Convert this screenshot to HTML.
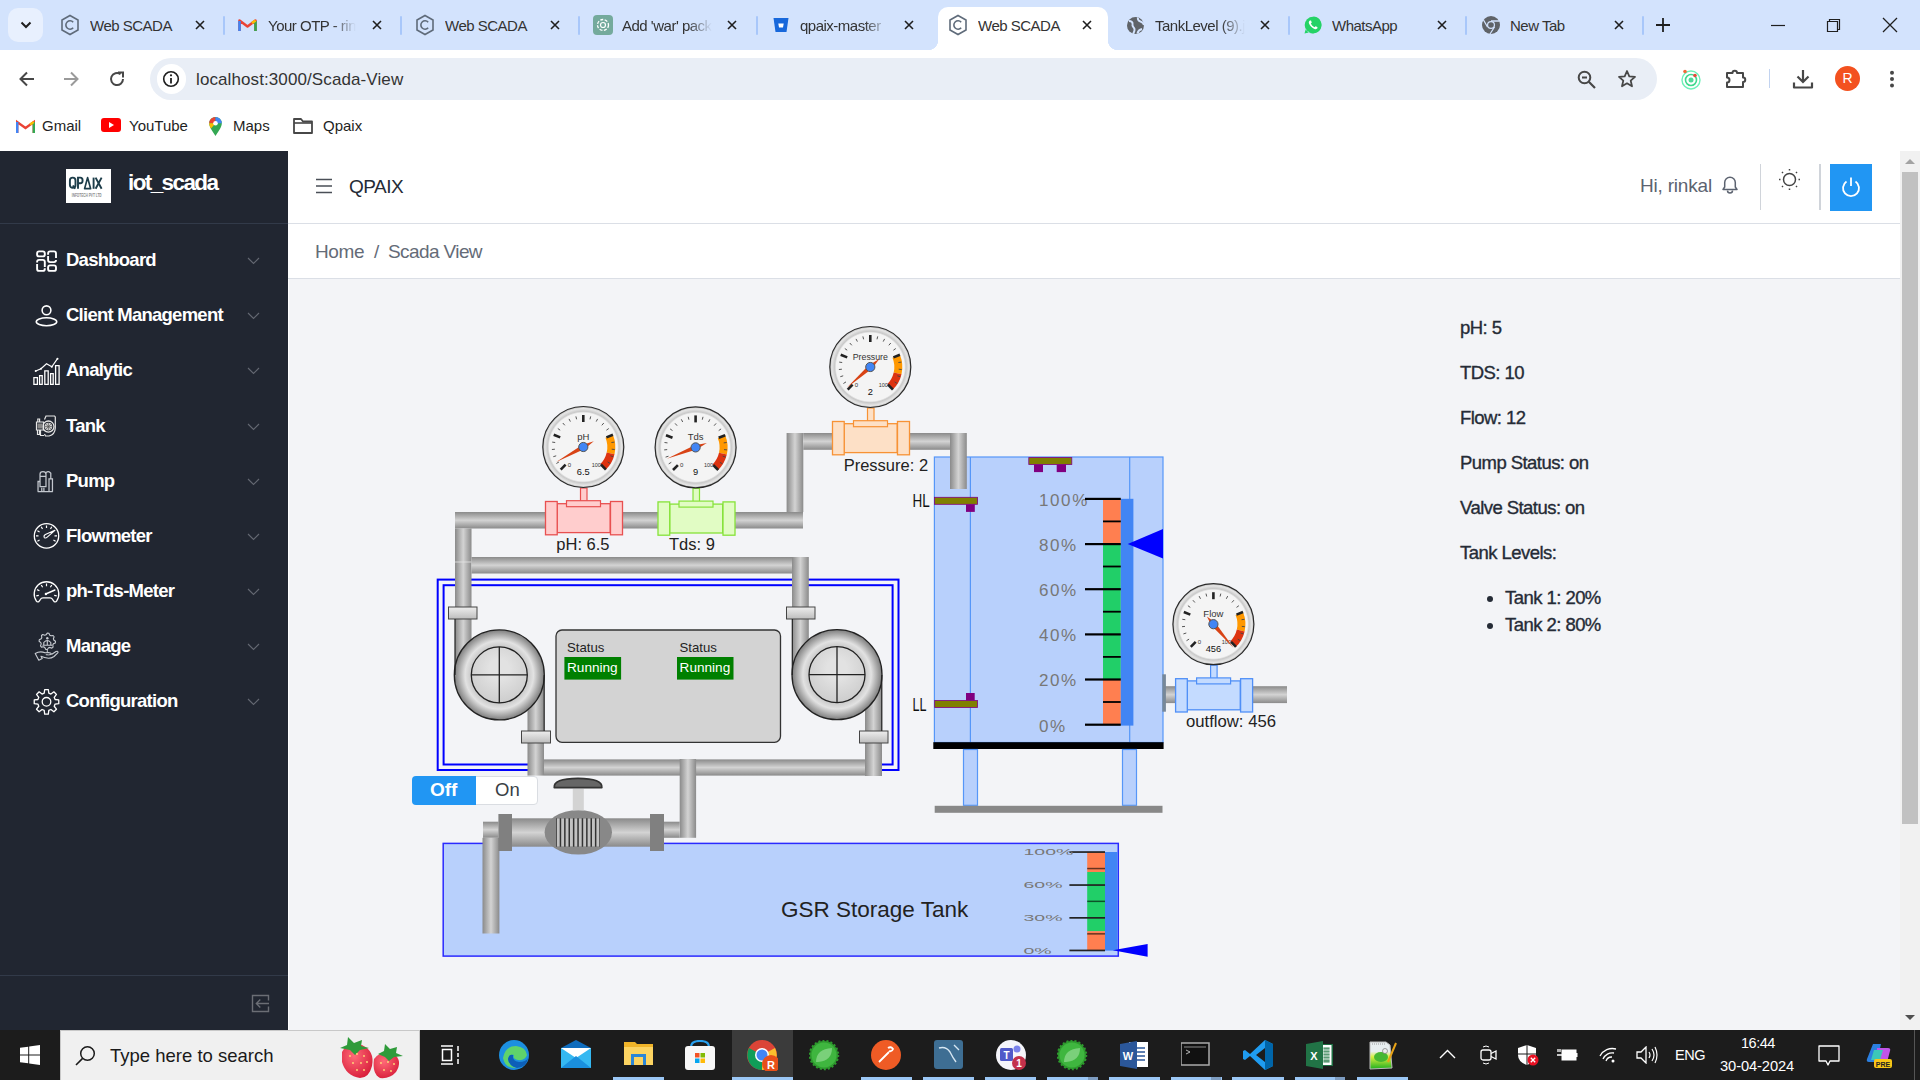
<!DOCTYPE html>
<html><head><meta charset="utf-8">
<style>
*{box-sizing:border-box;margin:0;padding:0}
html,body{width:1920px;height:1080px;overflow:hidden;font-family:"Liberation Sans",sans-serif;background:#fff}
.abs{position:absolute}
#tabs{position:absolute;left:0;top:0;width:1920px;height:50px;background:#d3e3fd}
#toolbar{position:absolute;left:0;top:50px;width:1920px;height:58px;background:#fff;border-radius:8px 8px 0 0}
#bm{position:absolute;left:0;top:108px;width:1920px;height:43px;background:#fff}
#page{position:absolute;left:0;top:151px;width:1920px;height:879px;background:#f3f4f7;overflow:hidden}
#side{position:absolute;left:0;top:0;width:288px;height:879px;background:#212631}
#hdr{position:absolute;left:288px;top:0;width:1612px;height:73px;background:#fff;border-bottom:1px solid #dbdfe6}
#bc{position:absolute;left:288px;top:73px;width:1612px;height:55px;background:#fff;border-bottom:1px solid #dbdfe6}
#scroll{position:absolute;left:1900px;top:0;width:20px;height:879px;background:#f1f1f1}
#taskbar{position:absolute;left:0;top:1030px;width:1920px;height:50px;background:#1c1c1c}
.t{position:absolute;white-space:nowrap}
</style></head><body>

<div id="tabs">
  <div class="abs" style="left:8px;top:8px;width:35px;height:34px;border-radius:10px;background:#e8f0fe"></div>
  <svg class="abs" style="left:19px;top:19px" width="14" height="12" viewBox="0 0 14 12"><path d="M2.5 3.5 L7 8 L11.5 3.5" fill="none" stroke="#1f1f1f" stroke-width="2"/></svg>
  <!-- active tab -->
  <div class="abs" style="left:938px;top:7px;width:170px;height:43px;background:#fff;border-radius:10px 10px 0 0"></div>
  <div class="abs" style="left:928px;top:40px;width:10px;height:10px;background:radial-gradient(circle at 0 0,#d3e3fd 10px,#fff 10.5px)"></div>
  <div class="abs" style="left:1108px;top:40px;width:10px;height:10px;background:radial-gradient(circle at 10px 0,#d3e3fd 10px,#fff 10.5px)"></div>
  <svg class="abs" style="left:60px;top:14px" width="20" height="22" viewBox="0 0 20 22"><path d="M10 1.5L18 6V16L10 20.5L2 16V6Z" fill="none" stroke="#5f6b7a" stroke-width="1.6"/><path d="M13.2 8.2A4.2 4.2 0 1 0 13.2 13.8" fill="none" stroke="#5f6b7a" stroke-width="1.6"/></svg>
  <div class="t" style="left:90px;top:17px;font-size:15px;letter-spacing:-0.5px;color:#333;width:100px;overflow:hidden">Web SCADA</div>
  <svg class="abs" style="left:195px;top:20px" width="10" height="10"><path d="M1 1L9 9M9 1L1 9" stroke="#1f1f1f" stroke-width="1.6"/></svg>
  <div class="abs" style="left:223px;top:16px;width:2px;height:19px;background:#a8c7fa;border-radius:1px"></div>
  <svg class="abs" style="left:238px;top:18px" width="19" height="14" viewBox="0 0 19 14"><path d="M1.5 13V2.5L9.5 8.5L17.5 2.5V13" fill="none" stroke="#ea4335" stroke-width="2.6" stroke-linejoin="round"/><path d="M1.5 3V13" stroke="#4285f4" stroke-width="2.6"/><path d="M17.5 3V13" stroke="#34a853" stroke-width="2.6"/><path d="M14 5L17.5 2.5" stroke="#fbbc04" stroke-width="2.6"/></svg>
  <div class="t" style="left:268px;top:17px;font-size:15px;letter-spacing:-0.5px;color:#333;width:88px;overflow:hidden;-webkit-mask-image:linear-gradient(to right,#000 64px,transparent 88px)">Your OTP - rinkal</div>
  <svg class="abs" style="left:372px;top:20px" width="10" height="10"><path d="M1 1L9 9M9 1L1 9" stroke="#1f1f1f" stroke-width="1.6"/></svg>
  <div class="abs" style="left:400px;top:16px;width:2px;height:19px;background:#a8c7fa;border-radius:1px"></div>
  <svg class="abs" style="left:415px;top:14px" width="20" height="22" viewBox="0 0 20 22"><path d="M10 1.5L18 6V16L10 20.5L2 16V6Z" fill="none" stroke="#5f6b7a" stroke-width="1.6"/><path d="M13.2 8.2A4.2 4.2 0 1 0 13.2 13.8" fill="none" stroke="#5f6b7a" stroke-width="1.6"/></svg>
  <div class="t" style="left:445px;top:17px;font-size:15px;letter-spacing:-0.5px;color:#333;width:100px;overflow:hidden">Web SCADA</div>
  <svg class="abs" style="left:550px;top:20px" width="10" height="10"><path d="M1 1L9 9M9 1L1 9" stroke="#1f1f1f" stroke-width="1.6"/></svg>
  <div class="abs" style="left:578px;top:16px;width:2px;height:19px;background:#a8c7fa;border-radius:1px"></div>
  <div class="abs" style="left:593px;top:15px;width:20px;height:20px;border-radius:4px;background:#74aa9c"></div><svg class="abs" style="left:593px;top:15px" width="20" height="20" viewBox="0 0 20 20"><circle cx="10" cy="10" r="5.5" fill="none" stroke="#fff" stroke-width="1.3" stroke-dasharray="3 1.5"/><circle cx="10" cy="10" r="2.5" fill="none" stroke="#fff" stroke-width="1.2"/></svg>
  <div class="t" style="left:622px;top:17px;font-size:15px;letter-spacing:-0.5px;color:#333;width:90px;overflow:hidden;-webkit-mask-image:linear-gradient(to right,#000 66px,transparent 90px)">Add 'war' package</div>
  <svg class="abs" style="left:727px;top:20px" width="10" height="10"><path d="M1 1L9 9M9 1L1 9" stroke="#1f1f1f" stroke-width="1.6"/></svg>
  <div class="abs" style="left:756px;top:16px;width:2px;height:19px;background:#a8c7fa;border-radius:1px"></div>
  <svg class="abs" style="left:772px;top:16px" width="18" height="18" viewBox="0 0 18 18"><path d="M1.5 2H16.5L14.5 16H3.5Z" fill="#1868db"/><path d="M6.3 7.5H11.7L11 11.5H7Z" fill="#fff"/></svg>
  <div class="t" style="left:800px;top:17px;font-size:15px;letter-spacing:-0.5px;color:#333;width:88px;overflow:hidden;-webkit-mask-image:linear-gradient(to right,#000 64px,transparent 88px)">qpaix-master</div>
  <svg class="abs" style="left:904px;top:20px" width="10" height="10"><path d="M1 1L9 9M9 1L1 9" stroke="#1f1f1f" stroke-width="1.6"/></svg>
  <svg class="abs" style="left:948px;top:14px" width="20" height="22" viewBox="0 0 20 22"><path d="M10 1.5L18 6V16L10 20.5L2 16V6Z" fill="none" stroke="#5f6b7a" stroke-width="1.6"/><path d="M13.2 8.2A4.2 4.2 0 1 0 13.2 13.8" fill="none" stroke="#5f6b7a" stroke-width="1.6"/></svg>
  <div class="t" style="left:978px;top:17px;font-size:15px;letter-spacing:-0.5px;color:#333;width:100px;overflow:hidden">Web SCADA</div>
  <svg class="abs" style="left:1082px;top:20px" width="10" height="10"><path d="M1 1L9 9M9 1L1 9" stroke="#1f1f1f" stroke-width="1.6"/></svg>
  <svg class="abs" style="left:1126px;top:16px" width="19" height="19" viewBox="0 0 19 19"><circle cx="9.5" cy="9.5" r="8.5" fill="#5f6368"/><path d="M3 5C5 5 7 6 6.5 8.5C6 10.5 8 11 8.5 13C9 15 7.5 17 7 18M12 1.5C11.5 3.5 12.5 5 14.5 5.5C16 6 17.5 7 18 9M11.5 17.5C12 15 13.5 13.5 16 13" fill="none" stroke="#d3e3fd" stroke-width="2"/></svg>
  <div class="t" style="left:1155px;top:17px;font-size:15px;letter-spacing:-0.5px;color:#333;width:90px;overflow:hidden;-webkit-mask-image:linear-gradient(to right,#000 66px,transparent 90px)">TankLevel (9).jsx</div>
  <svg class="abs" style="left:1260px;top:20px" width="10" height="10"><path d="M1 1L9 9M9 1L1 9" stroke="#1f1f1f" stroke-width="1.6"/></svg>
  <div class="abs" style="left:1288px;top:16px;width:2px;height:19px;background:#a8c7fa;border-radius:1px"></div>
  <svg class="abs" style="left:1303px;top:15px" width="20" height="20" viewBox="0 0 20 20"><path d="M10 1.5A8.5 8.5 0 1 1 2.7 14.3L1.5 18.5L5.8 17.4A8.5 8.5 0 0 0 10 1.5Z" fill="#25d366"/><circle cx="10" cy="10" r="8.3" fill="#25d366"/><path d="M7 5.5C6 6 5.5 7 6 8.5C7 11 9 13 11.5 14C13 14.5 14 14 14.5 13L14.3 12L12.5 11.2L11.5 12.2C10 11.5 8.5 10 7.8 8.5L8.8 7.5L8 5.6Z" fill="#fff"/></svg>
  <div class="t" style="left:1332px;top:17px;font-size:15px;letter-spacing:-0.5px;color:#333;width:100px;overflow:hidden">WhatsApp</div>
  <svg class="abs" style="left:1437px;top:20px" width="10" height="10"><path d="M1 1L9 9M9 1L1 9" stroke="#1f1f1f" stroke-width="1.6"/></svg>
  <div class="abs" style="left:1465px;top:16px;width:2px;height:19px;background:#a8c7fa;border-radius:1px"></div>
  <svg class="abs" style="left:1481px;top:15px" width="20" height="20" viewBox="0 0 20 20"><circle cx="10" cy="10" r="9" fill="#5f6368"/><circle cx="10" cy="10" r="4" fill="#d3e3fd"/><circle cx="10" cy="10" r="2.8" fill="#5f6368"/><path d="M10 6H18.5M6.5 12L2.5 5M13.5 12L9 19" stroke="#d3e3fd" stroke-width="1.3"/></svg>
  <div class="t" style="left:1510px;top:17px;font-size:15px;letter-spacing:-0.5px;color:#333;width:100px;overflow:hidden">New Tab</div>
  <svg class="abs" style="left:1614px;top:20px" width="10" height="10"><path d="M1 1L9 9M9 1L1 9" stroke="#1f1f1f" stroke-width="1.6"/></svg>
  <div class="abs" style="left:1642px;top:16px;width:2px;height:19px;background:#a8c7fa;border-radius:1px"></div>
  <svg class="abs" style="left:1655px;top:17px" width="16" height="16" viewBox="0 0 16 16"><path d="M8 1V15M1 8H15" stroke="#1f1f1f" stroke-width="1.8"/></svg>
  <svg class="abs" style="left:1770px;top:18px" width="16" height="14"><path d="M1 7.5H15" stroke="#1f1f1f" stroke-width="1.2"/></svg>
  <svg class="abs" style="left:1825px;top:17px" width="16" height="16"><path d="M2.5 4.5H12.5V14.5H2.5Z M4.5 4.5V2.5H14.5V12.5H12.5" fill="none" stroke="#1f1f1f" stroke-width="1.2"/></svg>
  <svg class="abs" style="left:1882px;top:17px" width="16" height="16"><path d="M1 1L15 15M15 1L1 15" stroke="#1f1f1f" stroke-width="1.3"/></svg>
</div>
<div id="toolbar">
  <svg class="abs" style="left:18px;top:20px" width="18" height="18" viewBox="0 0 18 18"><path d="M16 9H3M9 2.5L2.5 9L9 15.5" fill="none" stroke="#474747" stroke-width="2"/></svg>
  <svg class="abs" style="left:62px;top:20px" width="18" height="18" viewBox="0 0 18 18"><path d="M2 9H15M9 2.5L15.5 9L9 15.5" fill="none" stroke="#9a9a9a" stroke-width="2"/></svg>
  <svg class="abs" style="left:108px;top:20px" width="18" height="18" viewBox="0 0 18 18"><path d="M15 9A6 6 0 1 1 12.5 4.2" fill="none" stroke="#474747" stroke-width="2"/><path d="M10 2.5H15V7.5" fill="none" stroke="#474747" stroke-width="2"/></svg>
  <div class="abs" style="left:150px;top:8px;width:1507px;height:42px;border-radius:21px;background:#e9eef6"></div>
  <div class="abs" style="left:157px;top:14px;width:29px;height:30px;border-radius:15px;background:#fff"></div>
  <svg class="abs" style="left:162px;top:20px" width="18" height="18" viewBox="0 0 18 18"><circle cx="9" cy="9" r="7.3" fill="none" stroke="#1f1f1f" stroke-width="1.6"/><path d="M9 8V13.5" stroke="#1f1f1f" stroke-width="1.8"/><circle cx="9" cy="5.3" r="1.1" fill="#1f1f1f"/></svg>
  <div class="t" style="left:196px;top:20px;font-size:17px;color:#333;letter-spacing:0.1px">localhost:3000/Scada-View</div>
  <svg class="abs" style="left:1577px;top:20px" width="20" height="20" viewBox="0 0 20 20"><circle cx="7.5" cy="7.5" r="5.8" fill="none" stroke="#474747" stroke-width="2"/><path d="M5 7.5H10M11.8 11.8L18 18" stroke="#474747" stroke-width="2.2"/></svg>
  <svg class="abs" style="left:1617px;top:19px" width="20" height="20" viewBox="0 0 20 20"><path d="M10 2L12.3 7.3L18 7.8L13.7 11.6L15 17.3L10 14.3L5 17.3L6.3 11.6L2 7.8L7.7 7.3Z" fill="none" stroke="#474747" stroke-width="1.8" stroke-linejoin="round"/></svg>
  <svg class="abs" style="left:1680px;top:18px" width="22" height="22" viewBox="0 0 22 22"><circle cx="11" cy="12" r="9" fill="none" stroke="#6ef0b8" stroke-width="1.4"/><circle cx="11" cy="12" r="5.5" fill="none" stroke="#3fd98e" stroke-width="1.6"/><circle cx="11" cy="12" r="2.5" fill="#4fd99a"/><circle cx="5" cy="3.5" r="1.8" fill="#f26b3a"/><circle cx="15" cy="7.5" r="1.8" fill="#e74c3c"/></svg>
  <svg class="abs" style="left:1725px;top:18px" width="24" height="22" viewBox="0 0 24 22"><path d="M2 5H7.5A2.2 2.2 0 0 1 12 5H18V9.5A2.2 2.2 0 0 1 18 14V19H2V14.5A2.2 2.2 0 0 0 2 9.5Z" fill="none" stroke="#474747" stroke-width="2" stroke-linejoin="round"/></svg>
  <div class="abs" style="left:1769px;top:19px;width:1px;height:19px;background:#c2d3f0"></div>
  <svg class="abs" style="left:1792px;top:18px" width="22" height="22" viewBox="0 0 22 22"><path d="M11 2V14M5.5 8.5L11 14L16.5 8.5" fill="none" stroke="#474747" stroke-width="2.2"/><path d="M2 14.5V19.5H20V14.5" fill="none" stroke="#474747" stroke-width="2.2" stroke-linejoin="round"/></svg>
  <div class="abs" style="left:1835px;top:16px;width:25px;height:25px;border-radius:50%;background:#f3511f;color:#fff;font-size:14px;text-align:center;line-height:25px">R</div>
  <svg class="abs" style="left:1888px;top:20px" width="8" height="20"><circle cx="4" cy="2.8" r="2" fill="#474747"/><circle cx="4" cy="9" r="2" fill="#474747"/><circle cx="4" cy="15.6" r="2" fill="#474747"/></svg>
</div>
<div id="bm">
  <svg class="abs" style="left:16px;top:11px" width="19" height="15" viewBox="0 0 19 15"><path d="M1.2 14V3L9.5 9L17.8 3V14" fill="none" stroke="#ea4335" stroke-width="2.4"/><path d="M1.2 3V14" stroke="#4285f4" stroke-width="2.4"/><path d="M17.8 3V14" stroke="#34a853" stroke-width="2.4"/><path d="M14 5.5L17.8 3" stroke="#fbbc04" stroke-width="2.4"/></svg>
  <div class="t" style="left:42px;top:9px;font-size:15px;color:#1f1f1f">Gmail</div>
  <div class="abs" style="left:101px;top:10px;width:20px;height:14px;border-radius:3px;background:#f00"></div>
  <svg class="abs" style="left:101px;top:10px" width="20" height="14"><path d="M8 4L13 7L8 10Z" fill="#fff"/></svg>
  <div class="t" style="left:129px;top:9px;font-size:15px;color:#1f1f1f">YouTube</div>
  <svg class="abs" style="left:208px;top:8px" width="15" height="21" viewBox="0 0 15 21"><path d="M7.5 20C4 14.5 1.2 11 1.2 7.2A6.3 6.3 0 0 1 13.8 7.2C13.8 11 11 14.5 7.5 20Z" fill="#34a853"/><path d="M1.2 7.2A6.3 6.3 0 0 1 7.5 1V7.2Z" fill="#ea4335"/><path d="M7.5 1A6.3 6.3 0 0 1 13.8 7.2H7.5Z" fill="#4285f4"/><path d="M1.2 7.2H7.5L3 12.5C1.8 10.5 1.2 9 1.2 7.2Z" fill="#fbbc04"/><circle cx="7.5" cy="7.2" r="2.3" fill="#fff"/></svg>
  <div class="t" style="left:233px;top:9px;font-size:15px;color:#1f1f1f">Maps</div>
  <svg class="abs" style="left:292px;top:9px" width="22" height="18" viewBox="0 0 22 18"><path d="M2 2H9L11 4.5H20V16H2Z" fill="none" stroke="#474747" stroke-width="1.8" stroke-linejoin="round"/><path d="M2 6H20" stroke="#474747" stroke-width="1.6"/></svg>
  <div class="t" style="left:323px;top:9px;font-size:15px;color:#1f1f1f">Qpaix</div>
</div>

<div id="page">
  <div id="side">
<div class="abs" style="left:0;top:72px;width:288px;height:1px;background:#323a49"></div>
<div class="abs" style="left:66px;top:17.5px;width:45px;height:34.5px;background:#fff"></div>
<svg class="abs" style="left:66px;top:17px" width="45" height="35" viewBox="0 0 45 35"><g fill="none" stroke="#1d3d4a" stroke-width="1.9"><rect x="3.9" y="9.6" width="5.6" height="10.2" rx="2.8"/><path d="M6.8 17.5L9.2 20.8"/><path d="M12 20.8V9.6H14.3Q16.6 9.6 16.6 12.4Q16.6 15.2 14.3 15.2H12"/><path d="M18.6 20.6L21.6 9.6L24.6 20.6Z" stroke-width="1.7" stroke-linejoin="round"/><path d="M27.6 9.6V20.8"/><path d="M29.6 9.6L35.6 20.8M35.6 9.6L29.6 20.8"/></g><text x="5.8" y="28.8" font-size="5.5" fill="#8a8a8a" textLength="29.8" lengthAdjust="spacingAndGlyphs" font-family="Liberation Sans" font-weight="700">INFOTECH PVT LTD</text></svg>
<div class="t" style="left:128px;top:19px;font-size:22.5px;font-weight:700;color:#fff;letter-spacing:-1.6px">iot_scada</div>
<svg class="abs" style="left:33px;top:96px" width="28" height="28" viewBox="0 0 28 28"><g fill="none" stroke="#fff" stroke-width="1.9"><rect x="4.1" y="4.4" width="7.7" height="5" rx="2"/><rect x="15.1" y="18.4" width="7.9" height="5.5" rx="2"/><path d="M15.1 7.8V6.4Q15.1 4.4 17.1 4.4H21Q23 4.4 23 6.4V11M23 13V13.1Q23 15.1 21 15.1H17.1Q15.1 15.1 15.1 13.1V8.9"/><path d="M4.1 15.6V14.9Q4.1 12.9 6.1 12.9H9.8Q11.8 12.9 11.8 14.9V20M11.8 21.3V21.9Q11.8 23.9 9.8 23.9H6.1Q4.1 23.9 4.1 21.9V16.9"/></g></svg>
<div class="t" style="left:66px;top:98px;font-size:18.5px;line-height:22px;font-weight:700;color:#fff;letter-spacing:-0.75px">Dashboard</div>
<svg class="abs" style="left:247px;top:106px" width="13" height="8"><path d="M1 1L6.5 6.5L12 1" fill="none" stroke="#646872" stroke-width="1.1"/></svg>
<svg class="abs" style="left:35px;top:153px" width="23" height="23" viewBox="0 0 22 22"><circle cx="11" cy="6" r="4.2" fill="none" stroke="#fff" stroke-width="1.5"/><ellipse cx="11" cy="17" rx="9.8" ry="3.8" fill="none" stroke="#fff" stroke-width="1.5"/></svg>
<div class="t" style="left:66px;top:153px;font-size:18.5px;line-height:22px;font-weight:700;color:#fff;letter-spacing:-0.75px">Client Management</div>
<svg class="abs" style="left:247px;top:161px" width="13" height="8"><path d="M1 1L6.5 6.5L12 1" fill="none" stroke="#646872" stroke-width="1.1"/></svg>
<svg class="abs" style="left:28px;top:201px" width="36" height="36" viewBox="0 0 36 36"><path d="M5.9 25.6H9.4V32.4H5.9ZM11.6 23.6H14.2V32.4H11.6ZM16.8 18.8H20.2V32.4H16.8ZM22.6 21.6H25.2V32.4H22.6ZM27.6 13.6H31.1V32.4H27.6Z" fill="none" stroke="#fff" stroke-width="1.3"/><path d="M7.7 19L13 16.7L18.5 11.7L23.8 14.8L29.5 6.7" fill="none" stroke="#fff" stroke-width="1.2"/><circle cx="7.7" cy="19" r="1" fill="#fff"/><circle cx="13" cy="16.7" r="1" fill="#fff"/><circle cx="23.8" cy="14.8" r="1" fill="#fff"/><circle cx="29.5" cy="6.7" r="1" fill="#fff"/></svg>
<div class="t" style="left:66px;top:208px;font-size:18.5px;line-height:22px;font-weight:700;color:#fff;letter-spacing:-0.75px">Analytic</div>
<svg class="abs" style="left:247px;top:216px" width="13" height="8"><path d="M1 1L6.5 6.5L12 1" fill="none" stroke="#646872" stroke-width="1.1"/></svg>
<svg class="abs" style="left:35px;top:263px" width="22" height="24" viewBox="0 0 22 24"><path d="M9.5 5.5L11 2H19.5L20.3 3V14Q20 20.5 14 22H10.5L9.5 20" fill="none" stroke="#e6e6e6" stroke-width="1.2"/><circle cx="13.4" cy="12.6" r="5.6" fill="#23272f" stroke="#e6e6e6" stroke-width="1.3"/><circle cx="13.4" cy="12.6" r="3.8" fill="#cfcfcf"/><path d="M13.4 9V16.2M9.8 12.6H17M10.9 10.1L15.9 15.1M15.9 10.1L10.9 15.1" stroke="#555" stroke-width="0.7"/><path d="M1.5 8H8.5V16H1.5ZM2.8 8V5H4.6V8M2.5 16V20.5H4.5V16M5.5 16V21.5H9" fill="none" stroke="#e6e6e6" stroke-width="1.2"/><rect x="2.5" y="9.5" width="5" height="5" fill="#888"/></svg>
<div class="t" style="left:66px;top:264px;font-size:18.5px;line-height:22px;font-weight:700;color:#fff;letter-spacing:-0.75px">Tank</div>
<svg class="abs" style="left:247px;top:272px" width="13" height="8"><path d="M1 1L6.5 6.5L12 1" fill="none" stroke="#646872" stroke-width="1.1"/></svg>
<svg class="abs" style="left:35px;top:319px" width="23" height="23" viewBox="0 0 22 22"><path d="M2.6 20.8H17M4.8 15.9V4Q4.8 1.6 7.6 1.6Q10.5 1.6 10.5 4V15.9ZM4.8 6H10.5M10.5 13V2.5Q12.8 0.3 15.1 3V8.6M13.4 20.8V8.6H16.7V20.8M2.9 20.8V11H4.8M4.8 15.9H10.5M6.5 20.8V17M8.5 20.8V17" fill="none" stroke="#c3c7ce" stroke-width="1.2"/></svg>
<div class="t" style="left:66px;top:319px;font-size:18.5px;line-height:22px;font-weight:700;color:#fff;letter-spacing:-0.75px">Pump</div>
<svg class="abs" style="left:247px;top:327px" width="13" height="8"><path d="M1 1L6.5 6.5L12 1" fill="none" stroke="#646872" stroke-width="1.1"/></svg>
<svg class="abs" style="left:31px;top:369px" width="30" height="32" viewBox="0 0 30 32"><circle cx="15.5" cy="15.9" r="12.2" fill="none" stroke="#fff" stroke-width="1.3"/><path d="M8.57 19.90L6.41 21.15M7.50 15.90L5.00 15.90M8.57 11.90L6.41 10.65M11.50 8.97L10.25 6.81M15.50 7.90L15.50 5.40M19.50 8.97L20.75 6.81M23.50 15.90L26.00 15.90M22.43 19.90L24.59 21.15" stroke="#fff" stroke-width="1.2"/><path d="M13.3 17.6Q12.4 15.6 14.4 14.6L23.9 10.3L16.2 17.2Q14.6 18.6 13.3 17.6Z" fill="none" stroke="#fff" stroke-width="1.1" stroke-linejoin="round"/></svg>
<div class="t" style="left:66px;top:374px;font-size:18.5px;line-height:22px;font-weight:700;color:#fff;letter-spacing:-0.75px">Flowmeter</div>
<svg class="abs" style="left:247px;top:382px" width="13" height="8"><path d="M1 1L6.5 6.5L12 1" fill="none" stroke="#646872" stroke-width="1.1"/></svg>
<svg class="abs" style="left:31px;top:426px" width="30" height="28" viewBox="0 0 30 28"><path d="M5.4 24.05A12.3 12.3 0 1 1 25.6 24.05Q24.8 25.3 23.2 24.7L21.5 22.3Q20.8 20.8 19 20.8H12Q10.2 20.8 9.5 22.3L7.8 24.7Q6.2 25.3 5.4 24.05Z" fill="none" stroke="#fff" stroke-width="1.3" stroke-linejoin="round"/><path d="M7.82 18.35L5.26 18.81M8.43 13.70L6.07 12.60M11.60 10.25L10.30 7.99M15.50 9.20L15.50 6.60M19.40 10.25L20.70 7.99M23.18 18.35L25.74 18.81" stroke="#fff" stroke-width="1.2"/><path d="M14.7 17L23.9 13" stroke="#fff" stroke-width="1.4" stroke-linecap="round"/><circle cx="14.9" cy="17" r="1.2" fill="#fff"/></svg>
<div class="t" style="left:66px;top:429px;font-size:18.5px;line-height:22px;font-weight:700;color:#fff;letter-spacing:-0.75px">ph-Tds-Meter</div>
<svg class="abs" style="left:247px;top:437px" width="13" height="8"><path d="M1 1L6.5 6.5L12 1" fill="none" stroke="#646872" stroke-width="1.1"/></svg>
<svg class="abs" style="left:33px;top:479px" width="27" height="34" viewBox="0 0 27 34"><path d="M14.30 3.10L15.90 3.26L16.83 5.20L17.97 5.81L20.10 5.50L21.12 6.74L20.40 8.77L20.77 10.01L22.50 11.30L22.34 12.90L20.40 13.83L19.79 14.97L20.10 17.10L18.86 18.12L16.83 17.40L15.59 17.77L14.30 19.50L12.70 19.34L11.77 17.40L10.63 16.79L8.50 17.10L7.48 15.86L8.20 13.83L7.83 12.59L6.10 11.30L6.26 9.70L8.20 8.77L8.81 7.63L8.50 5.50L9.74 4.48L11.77 5.20L13.01 4.83Z" fill="none" stroke="#c8ccd2" stroke-width="1.1" stroke-linejoin="round"/><path d="M9.5 15.3H19M10.8 15V12.5Q14.3 8.5 17.8 12.5V15M14.3 10.5V15" fill="none" stroke="#c8ccd2" stroke-width="1.1"/><circle cx="14.3" cy="8.2" r="1.2" fill="#c8ccd2"/><path d="M2.2 23.4L5.8 30.3L9.2 28.6L8 26.3Q11.5 27.8 15.5 28.3Q18.5 28.3 21 26.5L25 22.7Q25.3 20.6 23 21.5L18.8 24.2Q17.5 22.4 15 22.6L12 22.8Q8.5 21.3 5 22.3Z" fill="none" stroke="#c8ccd2" stroke-width="1.1" stroke-linejoin="round"/><path d="M12.8 24.7Q15.5 25.2 18.3 24.5M14.3 19.6V22.3" fill="none" stroke="#c8ccd2" stroke-width="1"/></svg>
<div class="t" style="left:66px;top:484px;font-size:18.5px;line-height:22px;font-weight:700;color:#fff;letter-spacing:-0.75px">Manage</div>
<svg class="abs" style="left:247px;top:492px" width="13" height="8"><path d="M1 1L6.5 6.5L12 1" fill="none" stroke="#646872" stroke-width="1.1"/></svg>
<svg class="abs" style="left:31px;top:535px" width="30" height="30" viewBox="0 0 30 30"><path d="M13.20 7.20L13.67 3.54L17.33 3.54L17.80 7.20L19.95 8.09L22.88 5.83L25.47 8.42L23.21 11.35L24.10 13.50L27.76 13.97L27.76 17.63L24.10 18.10L23.21 20.25L25.47 23.18L22.88 25.77L19.95 23.51L17.80 24.40L17.33 28.06L13.67 28.06L13.20 24.40L11.05 23.51L8.12 25.77L5.53 23.18L7.79 20.25L6.90 18.10L3.24 17.63L3.24 13.97L6.90 13.50L7.79 11.35L5.53 8.42L8.12 5.83L11.05 8.09Z" fill="none" stroke="#fff" stroke-width="1.3" stroke-linejoin="round"/><circle cx="15.5" cy="15.8" r="4.3" fill="none" stroke="#fff" stroke-width="1.3"/></svg>
<div class="t" style="left:66px;top:539px;font-size:18.5px;line-height:22px;font-weight:700;color:#fff;letter-spacing:-0.75px">Configuration</div>
<svg class="abs" style="left:247px;top:547px" width="13" height="8"><path d="M1 1L6.5 6.5L12 1" fill="none" stroke="#646872" stroke-width="1.1"/></svg>
<div class="abs" style="left:0;top:824px;width:288px;height:1px;background:#323a49"></div><div class="abs" style="left:288px;top:128px;width:1px;height:751px;background:#fff"></div>
<svg class="abs" style="left:251px;top:843px" width="19" height="19" viewBox="0 0 19 19"><path d="M17.5 6.5V1.5H1.5V17.5H17.5V12.5" fill="none" stroke="#6b6e75" stroke-width="1.4"/><path d="M18 9.5H5.5M9.3 5.5L5.3 9.5L9.3 13.5" fill="none" stroke="#6b6e75" stroke-width="1.3"/></svg>
</div>
  <div id="hdr">
  <svg class="abs" style="left:28px;top:27px" width="16" height="16"><path d="M0 1.5H16M0 8H16M0 14.5H16" stroke="#4a4f57" stroke-width="1.3"/></svg>
  <div class="t" style="left:61px;top:25px;font-size:19px;line-height:22px;color:#252b36;letter-spacing:-0.5px">QPAIX</div>
  <div class="t" style="left:1352px;top:24px;font-size:19px;line-height:22px;color:#5c6370;letter-spacing:-0.2px">Hi, rinkal</div>
  <svg class="abs" style="left:1432px;top:23px" width="20" height="20" viewBox="0 0 20 20"><path d="M3 15.5H17L15.3 13V8.5A5.3 5.3 0 0 0 4.7 8.5V13Z" fill="none" stroke="#5c6370" stroke-width="1.5" stroke-linejoin="round"/><path d="M7.5 16.5A2.5 2.5 0 0 0 12.5 16.5" fill="none" stroke="#5c6370" stroke-width="1.5"/></svg>
  <div class="abs" style="left:1472px;top:13px;width:1px;height:46px;background:#d0d4da"></div>
  <svg class="abs" style="left:1490px;top:17px" width="23" height="23" viewBox="0 0 23 23"><circle cx="11.5" cy="11.5" r="6" fill="none" stroke="#444" stroke-width="1.5"/><path d="M11.5 1V2.5M11.5 20.5V22M1 11.5H2.5M20.5 11.5H22M4 4L5 5M18 18L19 19M4 19L5 18M18 5L19 4" stroke="#444" stroke-width="1.5"/></svg>
  <div class="abs" style="left:1531px;top:13px;width:2px;height:46px;background:#d0d4da"></div>
  <div class="abs" style="left:1542px;top:13px;width:42px;height:47px;background:#2196f3"></div>
  <svg class="abs" style="left:1552px;top:25px" width="22" height="22" viewBox="0 0 22 22"><path d="M6.5 5.5A8 8 0 1 0 15.5 5.5" fill="none" stroke="#fff" stroke-width="1.8"/><path d="M11 1.5V10" stroke="#fff" stroke-width="1.8"/></svg>
</div>
  <div id="bc">
  <div class="t" style="left:27px;top:17px;font-size:19px;line-height:22px;color:#646b77;letter-spacing:-0.4px">Home</div>
  <div class="t" style="left:86px;top:17px;font-size:19px;line-height:22px;color:#646b77">/</div>
  <div class="t" style="left:100px;top:17px;font-size:19px;line-height:22px;color:#646b77;letter-spacing:-0.6px">Scada View</div>
</div>
  <div id="info" style="position:absolute;left:1460px;top:0;color:#252b36;font-size:18.5px;line-height:22px;letter-spacing:-0.55px;-webkit-text-stroke:0.35px #252b36">
  <div class="t" style="left:0;top:166px">pH: 5</div>
  <div class="t" style="left:0;top:211px">TDS: 10</div>
  <div class="t" style="left:0;top:256px">Flow: 12</div>
  <div class="t" style="left:0;top:301px">Pump Status: on</div>
  <div class="t" style="left:0;top:346px">Valve Status: on</div>
  <div class="t" style="left:0;top:391px">Tank Levels:</div>
  <div class="abs" style="left:27px;top:445px;width:6px;height:6px;border-radius:50%;background:#252b36"></div>
  <div class="t" style="left:45px;top:436px">Tank 1: 20%</div>
  <div class="abs" style="left:27px;top:472px;width:6px;height:6px;border-radius:50%;background:#252b36"></div>
  <div class="t" style="left:45px;top:463px">Tank 2: 80%</div>
</div>
<div id="scroll">
  <svg class="abs" style="left:5px;top:7px" width="10" height="6"><path d="M0 6L5 1L10 6Z" fill="#a3a3a3"/></svg>
  <div class="abs" style="left:2px;top:21px;width:16px;height:652px;background:#c1c1c1"></div>
  <svg class="abs" style="left:5px;top:864px" width="10" height="6"><path d="M0 0L5 5L10 0Z" fill="#505050"/></svg>
</div>
</div>
<div id="diagram"><svg class="abs" style="left:0;top:0" width="1920" height="1080" font-family="Liberation Sans, sans-serif"><defs>
<linearGradient id="pH" x1="0" y1="0" x2="0" y2="1"><stop offset="0" stop-color="#8a8a8a"/><stop offset="0.5" stop-color="#d3d3d3"/><stop offset="1" stop-color="#8a8a8a"/></linearGradient>
<linearGradient id="pV" x1="0" y1="0" x2="1" y2="0"><stop offset="0" stop-color="#8a8a8a"/><stop offset="0.5" stop-color="#d3d3d3"/><stop offset="1" stop-color="#8a8a8a"/></linearGradient>
<linearGradient id="flg" x1="0" y1="0" x2="0" y2="1"><stop offset="0" stop-color="#eeeeee"/><stop offset="1" stop-color="#bdbdbd"/></linearGradient>
<radialGradient id="bez" cx="0.5" cy="0.5" r="0.5"><stop offset="0.84" stop-color="#f4f4f4"/><stop offset="0.88" stop-color="#c9c9c9"/><stop offset="0.95" stop-color="#e6e6e6"/><stop offset="1" stop-color="#bbbbbb"/></radialGradient>
<radialGradient id="pump" cx="0.5" cy="0.5" r="0.5"><stop offset="0.6" stop-color="#c4c4c4"/><stop offset="0.76" stop-color="#e2e2e2"/><stop offset="1" stop-color="#7e7e7e"/></radialGradient>
<radialGradient id="pumpIn" cx="0.5" cy="0.4" r="0.6"><stop offset="0.3" stop-color="#e2e2e2"/><stop offset="1" stop-color="#cdcdcd"/></radialGradient>
</defs>
<rect x="437.7" y="579.6" width="460.8" height="190.4" fill="none" stroke="#0000ff" stroke-width="2"/>
<rect x="443.6" y="585.2" width="449" height="179.3" fill="none" stroke="#0000ff" stroke-width="2"/>
<rect x="934.4" y="457" width="228.6" height="285.5" fill="#b8d0fc" stroke="#5596f8" stroke-width="1.2"/>
<line x1="970.4" y1="457" x2="970.4" y2="742.5" stroke="#5596f8" stroke-width="1.2"/>
<line x1="1129.7" y1="457" x2="1129.7" y2="742.5" stroke="#5596f8" stroke-width="1.2"/>
<rect x="933.3" y="742.2" width="230.3" height="6.8" fill="#000"/>
<rect x="963.5" y="749.5" width="14" height="55.8" fill="#b8d0fc" stroke="#5596f8" stroke-width="1.2"/>
<rect x="1122.5" y="749.5" width="14" height="55.8" fill="#b8d0fc" stroke="#5596f8" stroke-width="1.2"/>
<rect x="934.7" y="805.8" width="227.8" height="7" fill="#888"/>
<rect x="934.6" y="497.3" width="43" height="7" fill="#808000" stroke="#800080" stroke-width="0.8"/>
<rect x="966" y="504.3" width="8.8" height="7.6" fill="#800080"/>
<rect x="934.7" y="700.5" width="42.8" height="7" fill="#808000" stroke="#800080" stroke-width="0.8"/>
<rect x="966" y="693" width="8.7" height="7.5" fill="#800080"/>
<rect x="1028.8" y="457.6" width="43" height="6.9" fill="#808000" stroke="#800080" stroke-width="0.8"/>
<rect x="1034" y="464.5" width="9" height="7.6" fill="#800080"/>
<rect x="1056.7" y="464.5" width="9.3" height="7.6" fill="#800080"/>
<text x="912.6" y="507.4" font-size="18" fill="#111" transform="translate(912.6 0) scale(0.75 1) translate(-912.6 0)">HL</text>
<text x="912.5" y="710.8" font-size="18" fill="#111" transform="translate(912.5 0) scale(0.7 1) translate(-912.5 0)">LL</text>
<rect x="1103" y="498.8" width="17.8" height="45.2" fill="#ff7f50"/>
<rect x="1103" y="544" width="17.8" height="135.5" fill="#21cf68"/>
<rect x="1103" y="679.4" width="17.8" height="45.2" fill="#ff7f50"/>
<rect x="1120.8" y="498.8" width="12.6" height="226.8" fill="#4285f4"/>
<text x="1039" y="505.7" font-size="17" fill="#777" letter-spacing="1.6">100%</text>
<text x="1039" y="550.9" font-size="17" fill="#777" letter-spacing="1.6">80%</text>
<text x="1039" y="596" font-size="17" fill="#777" letter-spacing="1.6">60%</text>
<text x="1039" y="641.2" font-size="17" fill="#777" letter-spacing="1.6">40%</text>
<text x="1039" y="686.3" font-size="17" fill="#777" letter-spacing="1.6">20%</text>
<text x="1039" y="731.5" font-size="17" fill="#777" letter-spacing="1.6">0%</text>
<rect x="1085" y="497.8" width="35.8" height="2.2" fill="#000"/>
<rect x="1103" y="520.5" width="17.8" height="1.8" fill="#000"/>
<rect x="1085" y="543" width="35.8" height="2.2" fill="#000"/>
<rect x="1103" y="565.6" width="17.8" height="1.8" fill="#000"/>
<rect x="1085" y="588.1" width="35.8" height="2.2" fill="#000"/>
<rect x="1103" y="610.8" width="17.8" height="1.8" fill="#000"/>
<rect x="1085" y="633.3" width="35.8" height="2.2" fill="#000"/>
<rect x="1103" y="656" width="17.8" height="1.8" fill="#000"/>
<rect x="1085" y="678.4" width="35.8" height="2.2" fill="#000"/>
<rect x="1103" y="701.1" width="17.8" height="1.8" fill="#000"/>
<rect x="1085" y="723.6" width="35.8" height="2.2" fill="#000"/>
<path d="M1127.7 544.1L1163 528.9V558.5Z" fill="#0000ff"/>
<rect x="443.2" y="843.4" width="675.1" height="112.7" fill="#b8d0fc" stroke="#2a2aff" stroke-width="1.5"/>
<text x="781" y="917" font-size="22.5" fill="#222">GSR Storage Tank</text>
<rect x="1087.2" y="852" width="17.8" height="20" fill="#ff7f50"/>
<rect x="1087.2" y="872" width="17.8" height="59.2" fill="#21cf68"/>
<rect x="1087.2" y="931.2" width="17.8" height="19.4" fill="#ff7f50"/>
<rect x="1105" y="852" width="12.5" height="98.6" fill="#4285f4"/>
<rect x="1069.4" y="851.2" width="35.6" height="1.7" fill="#222"/>
<rect x="1069.4" y="884.2" width="35.6" height="1.7" fill="#222"/>
<rect x="1069.4" y="917" width="35.6" height="1.7" fill="#222"/>
<rect x="1069.4" y="949.6" width="35.6" height="1.7" fill="#222"/>
<rect x="1087.2" y="867.8" width="17.8" height="1.5" fill="rgba(0,0,0,0.6)"/>
<rect x="1087.2" y="900.6" width="17.8" height="1.5" fill="rgba(0,0,0,0.6)"/>
<rect x="1087.2" y="933.1" width="17.8" height="1.5" fill="rgba(0,0,0,0.6)"/>
<text x="1023.5" y="855.4" font-size="9.5" fill="#777" transform="translate(1023.5 0) scale(2.05 1) translate(-1023.5 0)">100%</text>
<text x="1023.5" y="888.4" font-size="9.5" fill="#777" transform="translate(1023.5 0) scale(2.05 1) translate(-1023.5 0)">60%</text>
<text x="1023.5" y="921.2" font-size="9.5" fill="#777" transform="translate(1023.5 0) scale(2.05 1) translate(-1023.5 0)">30%</text>
<text x="1023.5" y="953.8" font-size="9.5" fill="#777" transform="translate(1023.5 0) scale(2.05 1) translate(-1023.5 0)">0%</text>
<path d="M1112.8 950.2L1147.6 944V956.8Z" fill="#0000ff"/>
<rect x="455" y="512" width="348" height="16.5" fill="url(#pH)"/>
<rect x="455" y="528.5" width="16.5" height="143.5" fill="url(#pV)"/>
<line x1="455" y1="562" x2="471.5" y2="562" stroke="#e6e6e6" stroke-width="0.8"/>
<rect x="471.5" y="557" width="320.5" height="16.5" fill="url(#pH)"/>
<rect x="792" y="557" width="16.8" height="115" fill="url(#pV)"/>
<rect x="527.5" y="672" width="16.5" height="103.6" fill="url(#pV)"/>
<rect x="865" y="672" width="17" height="104" fill="url(#pV)"/>
<rect x="544" y="759.4" width="321" height="16.2" fill="url(#pH)"/>
<rect x="448.5" y="607" width="28.5" height="12" fill="url(#flg)" stroke="#444" stroke-width="1"/>
<rect x="786.5" y="607" width="28.5" height="12" fill="url(#flg)" stroke="#444" stroke-width="1"/>
<rect x="521.5" y="731" width="29" height="12" fill="url(#flg)" stroke="#444" stroke-width="1"/>
<rect x="859.5" y="731" width="28.5" height="12" fill="url(#flg)" stroke="#444" stroke-width="1"/>
<circle cx="499.3" cy="674.9" r="45" fill="url(#pump)" stroke="#222" stroke-width="1.3"/>
<circle cx="499.3" cy="674.9" r="28" fill="url(#pumpIn)" stroke="#222" stroke-width="1.3"/>
<path d="M471.3 674.9H527.3M499.3 646.9V702.9" stroke="#222" stroke-width="1.3"/>
<circle cx="837" cy="674.7" r="45" fill="url(#pump)" stroke="#222" stroke-width="1.3"/>
<circle cx="837" cy="674.7" r="28" fill="url(#pumpIn)" stroke="#222" stroke-width="1.3"/>
<path d="M809 674.7H865M837 646.7V702.7" stroke="#222" stroke-width="1.3"/>
<path d="M455 619V675M544.2 675V731M792.3 619V675M881.8 675V731" stroke="#222" stroke-width="1.2"/>
<rect x="556" y="630" width="224.5" height="112.3" rx="6" fill="#d3d3d3" stroke="#333" stroke-width="1.3"/>
<text x="567" y="651.6" font-size="13.2" fill="#222">Status</text>
<rect x="564.4" y="657" width="56.7" height="22.6" fill="#008000"/>
<text x="567" y="672" font-size="13.6" fill="#fff">Running</text>
<text x="679.5" y="651.6" font-size="13.2" fill="#222">Status</text>
<rect x="677" y="657" width="56.5" height="22.6" fill="#008000"/>
<text x="679.6" y="672" font-size="13.6" fill="#fff">Running</text>
<rect x="679.7" y="759" width="16.4" height="78.8" fill="url(#pV)"/>
<rect x="664" y="821.7" width="15.7" height="16.1" fill="url(#pH)"/>
<rect x="483" y="821.7" width="15.5" height="16.1" fill="url(#pH)"/>
<rect x="482.5" y="837.8" width="16.9" height="95.7" fill="url(#pV)"/>
<rect x="512" y="818.3" width="138" height="28.4" fill="url(#pH)"/>
<rect x="498.4" y="814" width="13.6" height="37" fill="#808080"/>
<rect x="650" y="814" width="14" height="37" fill="#808080"/>
<ellipse cx="578.3" cy="832.3" rx="33.7" ry="22.3" fill="#888"/>
<rect x="556" y="818.3" width="44" height="28.4" fill="#333"/>
<rect x="556.8" y="818.3" width="2.9" height="28.4" fill="#c2c2c2"/>
<rect x="561.2" y="818.3" width="2.9" height="28.4" fill="#c2c2c2"/>
<rect x="565.6" y="818.3" width="2.9" height="28.4" fill="#c2c2c2"/>
<rect x="570" y="818.3" width="2.9" height="28.4" fill="#c2c2c2"/>
<rect x="574.4" y="818.3" width="2.9" height="28.4" fill="#c2c2c2"/>
<rect x="578.8" y="818.3" width="2.9" height="28.4" fill="#c2c2c2"/>
<rect x="583.2" y="818.3" width="2.9" height="28.4" fill="#c2c2c2"/>
<rect x="587.6" y="818.3" width="2.9" height="28.4" fill="#c2c2c2"/>
<rect x="592" y="818.3" width="2.9" height="28.4" fill="#c2c2c2"/>
<rect x="596.4" y="818.3" width="2.9" height="28.4" fill="#c2c2c2"/>
<rect x="572.8" y="788.9" width="11" height="21.5" fill="#d3d3d3"/>
<path d="M554.3 787.6Q553 778.5 578 778.3Q603 778.5 601.8 787.6Z" fill="#666" stroke="#333" stroke-width="1.8" stroke-linejoin="round"/>
<rect x="786.6" y="433" width="16.7" height="79" fill="url(#pV)"/>
<rect x="803.3" y="433" width="146.7" height="16.8" fill="url(#pH)"/>
<rect x="950" y="433" width="16.8" height="56" fill="url(#pV)"/>
<rect x="1165" y="686.2" width="122" height="16.9" fill="url(#pH)"/>
<rect x="1162.3" y="674.3" width="3.6" height="37.4" fill="#778899"/>
<rect x="580.5" y="488" width="6.5" height="14.5" fill="#ffcdcd" stroke="#e85050" stroke-width="1.2"/>
<rect x="557.2" y="503.7" width="53" height="28.9" fill="#ffcdcd" stroke="#e85050" stroke-width="1.3"/>
<rect x="545.5" y="501.5" width="11.7" height="33.3" fill="#ffcdcd" stroke="#e85050" stroke-width="1.3"/>
<rect x="610.5" y="501.5" width="12" height="33.3" fill="#ffcdcd" stroke="#e85050" stroke-width="1.3"/>
<rect x="566.5" y="500.7" width="34" height="6" fill="#ffcdcd" stroke="#e85050" stroke-width="1.2"/>
<rect x="693" y="488.4" width="6.5" height="14.5" fill="#e1fcc4" stroke="#86e23a" stroke-width="1.2"/>
<rect x="669.7" y="504.1" width="53" height="28.9" fill="#e1fcc4" stroke="#86e23a" stroke-width="1.3"/>
<rect x="658" y="501.9" width="11.7" height="33.3" fill="#e1fcc4" stroke="#86e23a" stroke-width="1.3"/>
<rect x="723" y="501.9" width="12" height="33.3" fill="#e1fcc4" stroke="#86e23a" stroke-width="1.3"/>
<rect x="679" y="501.1" width="34" height="6" fill="#e1fcc4" stroke="#86e23a" stroke-width="1.2"/>
<rect x="867.5" y="408" width="6.5" height="14.5" fill="#fde0c6" stroke="#f79235" stroke-width="1.2"/>
<rect x="844.2" y="423.7" width="53" height="28.9" fill="#fde0c6" stroke="#f79235" stroke-width="1.3"/>
<rect x="832.5" y="421.5" width="11.7" height="33.3" fill="#fde0c6" stroke="#f79235" stroke-width="1.3"/>
<rect x="897.5" y="421.5" width="12" height="33.3" fill="#fde0c6" stroke="#f79235" stroke-width="1.3"/>
<rect x="853.5" y="420.7" width="34" height="6" fill="#fde0c6" stroke="#f79235" stroke-width="1.2"/>
<rect x="1210.6" y="665.2" width="6.5" height="14.5" fill="#c4dbff" stroke="#4f8ff7" stroke-width="1.2"/>
<rect x="1187.3" y="680.9" width="53" height="28.9" fill="#c4dbff" stroke="#4f8ff7" stroke-width="1.3"/>
<rect x="1175.6" y="678.7" width="11.7" height="33.3" fill="#c4dbff" stroke="#4f8ff7" stroke-width="1.3"/>
<rect x="1240.6" y="678.7" width="12" height="33.3" fill="#c4dbff" stroke="#4f8ff7" stroke-width="1.3"/>
<rect x="1196.6" y="677.9" width="34" height="6" fill="#c4dbff" stroke="#4f8ff7" stroke-width="1.2"/>
<circle cx="583.3" cy="447" r="40.5" fill="url(#bez)" stroke="#2a2a2a" stroke-width="1.2"/>
<path d="M612.9 434.8A32 32 0 0 1 614.5 454.2L606.7 452.4A24 24 0 0 0 605.5 437.8Z" fill="#ff9800"/>
<path d="M614.5 454.2A32 32 0 0 1 605.9 469.6L600.3 464A24 24 0 0 0 606.7 452.4Z" fill="#dd3311"/>
<line x1="565.6" y1="464.7" x2="560.7" y2="469.6" stroke="#222" stroke-width="2.6"/>
<line x1="559" y1="461.9" x2="556.4" y2="463.5" stroke="#444" stroke-width="0.9"/>
<line x1="556.2" y1="455.8" x2="553.3" y2="456.7" stroke="#444" stroke-width="0.9"/>
<line x1="554.9" y1="449.2" x2="551.9" y2="449.5" stroke="#444" stroke-width="0.9"/>
<line x1="555.2" y1="442.5" x2="552.2" y2="442.1" stroke="#444" stroke-width="0.9"/>
<line x1="560.2" y1="437.4" x2="553.7" y2="434.8" stroke="#222" stroke-width="2.6"/>
<line x1="560.2" y1="430.2" x2="557.8" y2="428.5" stroke="#444" stroke-width="0.9"/>
<line x1="564.8" y1="425.3" x2="562.8" y2="423" stroke="#444" stroke-width="0.9"/>
<line x1="570.4" y1="421.6" x2="569" y2="418.9" stroke="#444" stroke-width="0.9"/>
<line x1="576.6" y1="419.3" x2="575.9" y2="416.4" stroke="#444" stroke-width="0.9"/>
<line x1="583.3" y1="422" x2="583.3" y2="415" stroke="#222" stroke-width="2.6"/>
<line x1="590" y1="419.3" x2="590.7" y2="416.4" stroke="#444" stroke-width="0.9"/>
<line x1="596.2" y1="421.6" x2="597.6" y2="418.9" stroke="#444" stroke-width="0.9"/>
<line x1="601.8" y1="425.3" x2="603.8" y2="423" stroke="#444" stroke-width="0.9"/>
<line x1="606.4" y1="430.2" x2="608.8" y2="428.5" stroke="#444" stroke-width="0.9"/>
<line x1="606.4" y1="437.4" x2="612.9" y2="434.8" stroke="#222" stroke-width="2.6"/>
<line x1="611.4" y1="442.5" x2="614.4" y2="442.1" stroke="#444" stroke-width="0.9"/>
<line x1="611.7" y1="449.2" x2="614.7" y2="449.5" stroke="#444" stroke-width="0.9"/>
<line x1="610.4" y1="455.8" x2="613.3" y2="456.7" stroke="#444" stroke-width="0.9"/>
<line x1="607.6" y1="461.9" x2="610.2" y2="463.5" stroke="#444" stroke-width="0.9"/>
<line x1="601" y1="464.7" x2="605.9" y2="469.6" stroke="#222" stroke-width="2.6"/>
<text x="583.3" y="440" font-size="9.5" fill="#333" text-anchor="middle">pH</text>
<text x="583.3" y="475" font-size="9.3" fill="#111" text-anchor="middle">6.5</text>
<text x="569.3" y="467" font-size="6" fill="#333" text-anchor="middle">0</text>
<text x="596.3" y="467" font-size="5.5" fill="#333" text-anchor="middle">100</text>
<path d="M556.2 462L582.1 444.9L593.8 441.2L584.5 449.1Z" fill="#d84315"/>
<circle cx="583.3" cy="447" r="4.6" fill="#4285f4" stroke="#555" stroke-width="1"/>
<circle cx="695.6" cy="447.4" r="40.5" fill="url(#bez)" stroke="#2a2a2a" stroke-width="1.2"/>
<path d="M725.2 435.2A32 32 0 0 1 726.8 454.6L719 452.8A24 24 0 0 0 717.8 438.2Z" fill="#ff9800"/>
<path d="M726.8 454.6A32 32 0 0 1 718.2 470L712.6 464.4A24 24 0 0 0 719 452.8Z" fill="#dd3311"/>
<line x1="677.9" y1="465.1" x2="673" y2="470" stroke="#222" stroke-width="2.6"/>
<line x1="671.3" y1="462.3" x2="668.7" y2="463.9" stroke="#444" stroke-width="0.9"/>
<line x1="668.5" y1="456.2" x2="665.6" y2="457.1" stroke="#444" stroke-width="0.9"/>
<line x1="667.2" y1="449.6" x2="664.2" y2="449.9" stroke="#444" stroke-width="0.9"/>
<line x1="667.5" y1="442.9" x2="664.5" y2="442.5" stroke="#444" stroke-width="0.9"/>
<line x1="672.5" y1="437.8" x2="666" y2="435.2" stroke="#222" stroke-width="2.6"/>
<line x1="672.5" y1="430.6" x2="670.1" y2="428.9" stroke="#444" stroke-width="0.9"/>
<line x1="677.1" y1="425.7" x2="675.1" y2="423.4" stroke="#444" stroke-width="0.9"/>
<line x1="682.7" y1="422" x2="681.3" y2="419.3" stroke="#444" stroke-width="0.9"/>
<line x1="688.9" y1="419.7" x2="688.2" y2="416.8" stroke="#444" stroke-width="0.9"/>
<line x1="695.6" y1="422.4" x2="695.6" y2="415.4" stroke="#222" stroke-width="2.6"/>
<line x1="702.3" y1="419.7" x2="703" y2="416.8" stroke="#444" stroke-width="0.9"/>
<line x1="708.5" y1="422" x2="709.9" y2="419.3" stroke="#444" stroke-width="0.9"/>
<line x1="714.1" y1="425.7" x2="716.1" y2="423.4" stroke="#444" stroke-width="0.9"/>
<line x1="718.7" y1="430.6" x2="721.1" y2="428.9" stroke="#444" stroke-width="0.9"/>
<line x1="718.7" y1="437.8" x2="725.2" y2="435.2" stroke="#222" stroke-width="2.6"/>
<line x1="723.7" y1="442.9" x2="726.7" y2="442.5" stroke="#444" stroke-width="0.9"/>
<line x1="724" y1="449.6" x2="727" y2="449.9" stroke="#444" stroke-width="0.9"/>
<line x1="722.7" y1="456.2" x2="725.6" y2="457.1" stroke="#444" stroke-width="0.9"/>
<line x1="719.9" y1="462.3" x2="722.5" y2="463.9" stroke="#444" stroke-width="0.9"/>
<line x1="713.3" y1="465.1" x2="718.2" y2="470" stroke="#222" stroke-width="2.6"/>
<text x="695.6" y="440.4" font-size="9.5" fill="#333" text-anchor="middle">Tds</text>
<text x="695.6" y="475.4" font-size="9.3" fill="#111" text-anchor="middle">9</text>
<text x="681.6" y="467.4" font-size="6" fill="#333" text-anchor="middle">0</text>
<text x="708.6" y="467.4" font-size="5.5" fill="#333" text-anchor="middle">100</text>
<path d="M666.8 458.8L694.7 445.2L706.8 443L696.5 449.6Z" fill="#d84315"/>
<circle cx="695.6" cy="447.4" r="4.6" fill="#4285f4" stroke="#555" stroke-width="1"/>
<circle cx="870.3" cy="367" r="40.5" fill="url(#bez)" stroke="#2a2a2a" stroke-width="1.2"/>
<path d="M899.9 354.8A32 32 0 0 1 901.5 374.2L893.7 372.4A24 24 0 0 0 892.5 357.8Z" fill="#ff9800"/>
<path d="M901.5 374.2A32 32 0 0 1 892.9 389.6L887.3 384A24 24 0 0 0 893.7 372.4Z" fill="#dd3311"/>
<line x1="852.6" y1="384.7" x2="847.7" y2="389.6" stroke="#222" stroke-width="2.6"/>
<line x1="846" y1="381.9" x2="843.4" y2="383.5" stroke="#444" stroke-width="0.9"/>
<line x1="843.2" y1="375.8" x2="840.3" y2="376.7" stroke="#444" stroke-width="0.9"/>
<line x1="841.9" y1="369.2" x2="838.9" y2="369.5" stroke="#444" stroke-width="0.9"/>
<line x1="842.2" y1="362.5" x2="839.2" y2="362.1" stroke="#444" stroke-width="0.9"/>
<line x1="847.2" y1="357.4" x2="840.7" y2="354.8" stroke="#222" stroke-width="2.6"/>
<line x1="847.2" y1="350.2" x2="844.8" y2="348.5" stroke="#444" stroke-width="0.9"/>
<line x1="851.8" y1="345.3" x2="849.8" y2="343" stroke="#444" stroke-width="0.9"/>
<line x1="857.4" y1="341.6" x2="856" y2="338.9" stroke="#444" stroke-width="0.9"/>
<line x1="863.6" y1="339.3" x2="862.9" y2="336.4" stroke="#444" stroke-width="0.9"/>
<line x1="870.3" y1="342" x2="870.3" y2="335" stroke="#222" stroke-width="2.6"/>
<line x1="877" y1="339.3" x2="877.7" y2="336.4" stroke="#444" stroke-width="0.9"/>
<line x1="883.2" y1="341.6" x2="884.6" y2="338.9" stroke="#444" stroke-width="0.9"/>
<line x1="888.8" y1="345.3" x2="890.8" y2="343" stroke="#444" stroke-width="0.9"/>
<line x1="893.4" y1="350.2" x2="895.8" y2="348.5" stroke="#444" stroke-width="0.9"/>
<line x1="893.4" y1="357.4" x2="899.9" y2="354.8" stroke="#222" stroke-width="2.6"/>
<line x1="898.4" y1="362.5" x2="901.4" y2="362.1" stroke="#444" stroke-width="0.9"/>
<line x1="898.7" y1="369.2" x2="901.7" y2="369.5" stroke="#444" stroke-width="0.9"/>
<line x1="897.4" y1="375.8" x2="900.3" y2="376.7" stroke="#444" stroke-width="0.9"/>
<line x1="894.6" y1="381.9" x2="897.2" y2="383.5" stroke="#444" stroke-width="0.9"/>
<line x1="888" y1="384.7" x2="892.9" y2="389.6" stroke="#222" stroke-width="2.6"/>
<text x="870.3" y="360" font-size="8.8" fill="#333" text-anchor="middle">Pressure</text>
<text x="870.3" y="395" font-size="9.3" fill="#111" text-anchor="middle">2</text>
<text x="856.3" y="387" font-size="6" fill="#333" text-anchor="middle">0</text>
<text x="883.3" y="387" font-size="5.5" fill="#333" text-anchor="middle">100</text>
<path d="M847.1 387.5L868.7 365.2L879.3 359L871.9 368.8Z" fill="#d84315"/>
<circle cx="870.3" cy="367" r="4.6" fill="#4285f4" stroke="#555" stroke-width="1"/>
<circle cx="1213.4" cy="624.2" r="40.5" fill="url(#bez)" stroke="#2a2a2a" stroke-width="1.2"/>
<path d="M1243 612A32 32 0 0 1 1244.6 631.4L1236.8 629.6A24 24 0 0 0 1235.6 615Z" fill="#ff9800"/>
<path d="M1244.6 631.4A32 32 0 0 1 1236 646.8L1230.4 641.2A24 24 0 0 0 1236.8 629.6Z" fill="#dd3311"/>
<line x1="1195.7" y1="641.9" x2="1190.8" y2="646.8" stroke="#222" stroke-width="2.6"/>
<line x1="1189.1" y1="639.1" x2="1186.5" y2="640.7" stroke="#444" stroke-width="0.9"/>
<line x1="1186.3" y1="633" x2="1183.4" y2="633.9" stroke="#444" stroke-width="0.9"/>
<line x1="1185" y1="626.4" x2="1182" y2="626.7" stroke="#444" stroke-width="0.9"/>
<line x1="1185.3" y1="619.7" x2="1182.3" y2="619.3" stroke="#444" stroke-width="0.9"/>
<line x1="1190.3" y1="614.6" x2="1183.8" y2="612" stroke="#222" stroke-width="2.6"/>
<line x1="1190.3" y1="607.4" x2="1187.9" y2="605.7" stroke="#444" stroke-width="0.9"/>
<line x1="1194.9" y1="602.5" x2="1192.9" y2="600.2" stroke="#444" stroke-width="0.9"/>
<line x1="1200.5" y1="598.8" x2="1199.1" y2="596.1" stroke="#444" stroke-width="0.9"/>
<line x1="1206.7" y1="596.5" x2="1206" y2="593.6" stroke="#444" stroke-width="0.9"/>
<line x1="1213.4" y1="599.2" x2="1213.4" y2="592.2" stroke="#222" stroke-width="2.6"/>
<line x1="1220.1" y1="596.5" x2="1220.8" y2="593.6" stroke="#444" stroke-width="0.9"/>
<line x1="1226.3" y1="598.8" x2="1227.7" y2="596.1" stroke="#444" stroke-width="0.9"/>
<line x1="1231.9" y1="602.5" x2="1233.9" y2="600.2" stroke="#444" stroke-width="0.9"/>
<line x1="1236.5" y1="607.4" x2="1238.9" y2="605.7" stroke="#444" stroke-width="0.9"/>
<line x1="1236.5" y1="614.6" x2="1243" y2="612" stroke="#222" stroke-width="2.6"/>
<line x1="1241.5" y1="619.7" x2="1244.5" y2="619.3" stroke="#444" stroke-width="0.9"/>
<line x1="1241.8" y1="626.4" x2="1244.8" y2="626.7" stroke="#444" stroke-width="0.9"/>
<line x1="1240.5" y1="633" x2="1243.4" y2="633.9" stroke="#444" stroke-width="0.9"/>
<line x1="1237.7" y1="639.1" x2="1240.3" y2="640.7" stroke="#444" stroke-width="0.9"/>
<line x1="1231.1" y1="641.9" x2="1236" y2="646.8" stroke="#222" stroke-width="2.6"/>
<text x="1213.4" y="617.2" font-size="9.5" fill="#333" text-anchor="middle">Flow</text>
<text x="1213.4" y="652.2" font-size="9.3" fill="#111" text-anchor="middle">456</text>
<text x="1199.4" y="644.2" font-size="6" fill="#333" text-anchor="middle">0</text>
<text x="1226.4" y="644.2" font-size="5.5" fill="#333" text-anchor="middle">100</text>
<path d="M1233.5 647.8L1211.6 625.8L1206.9 616.6L1215.2 622.6Z" fill="#d84315"/>
<circle cx="1213.4" cy="624.2" r="4.6" fill="#4285f4" stroke="#555" stroke-width="1"/>
<text x="556.3" y="550.4" font-size="16.5" fill="#222">pH: 6.5</text>
<text x="669" y="550.4" font-size="16.5" fill="#222">Tds: 9</text>
<text x="843.7" y="470.5" font-size="16.5" fill="#222">Pressure: 2</text>
<text x="1186" y="727" font-size="16.7" fill="#222">outflow: 456</text></svg><div class="abs" style="left:465px;top:776px;width:73px;height:29px;border:1px solid #dadde2;border-radius:4px;background:#fff"></div>
<div class="abs" style="left:412px;top:776px;width:64px;height:29px;background:#2196f3;border-radius:4px 0 0 4px"></div>
<div class="t" style="left:430px;top:780px;font-size:19px;line-height:20px;font-weight:700;color:#fff">Off</div>
<div class="t" style="left:495px;top:780px;font-size:18.5px;line-height:20px;color:#383e45">On</div></div><!--/diagram-->
<div id="taskbar">
<svg class="abs" style="left:20px;top:15px" width="20" height="20" viewBox="0 0 20 20"><path d="M0 2.8L8.2 1.7V9.5H0ZM9.2 1.5L20 0V9.5H9.2ZM0 10.5H8.2V18.3L0 17.2ZM9.2 10.5H20V20L9.2 18.5Z" fill="#fff"/></svg>
<div class="abs" style="left:60px;top:0;width:360px;height:50px;background:#f0f0f0;border:1px solid #c8c8c8;border-bottom:none"></div>
<svg class="abs" style="left:75px;top:15px" width="21" height="21" viewBox="0 0 21 21"><circle cx="12.5" cy="8.5" r="6.8" fill="none" stroke="#1a1a1a" stroke-width="1.5"/><path d="M7.6 13.4L1 20" stroke="#1a1a1a" stroke-width="1.6"/></svg>
<div class="t" style="left:110px;top:15px;font-size:18.5px;line-height:22px;color:#1a1a1a">Type here to search</div>
<svg class="abs" style="left:338px;top:2px" width="68" height="48" viewBox="0 0 68 48">
<defs><radialGradient id="sbg" cx="0.4" cy="0.35" r="0.7"><stop offset="0" stop-color="#ff6a78"/><stop offset="1" stop-color="#d81e3a"/></radialGradient></defs>
<path d="M4 20Q10 9 24 13Q37 19 34 34Q31 46 22 46Q8 44 4 30Z" fill="url(#sbg)"/>
<path d="M36 27Q44 17 56 22Q65 29 58 40Q52 47 42 46Q34 42 36 27Z" fill="url(#sbg)"/>
<path d="M2 16L9 13L10 5L16 11L24 8L23 14L31 16L22 18L17 23L12 18Z" fill="#2f9b3a"/>
<path d="M40 22L46 19L47 12L52 17L59 15L58 21L65 24L56 25L51 29L47 25Z" fill="#2f9b3a"/>
<g fill="#ffe07a"><circle cx="12" cy="24" r="0.9"/><circle cx="19" cy="22" r="0.9"/><circle cx="26" cy="24" r="0.9"/><circle cx="15" cy="31" r="0.9"/><circle cx="23" cy="31" r="0.9"/><circle cx="29" cy="30" r="0.9"/><circle cx="19" cy="38" r="0.9"/><circle cx="26" cy="38" r="0.9"/><circle cx="43" cy="31" r="0.9"/><circle cx="50" cy="30" r="0.9"/><circle cx="56" cy="32" r="0.9"/><circle cx="46" cy="38" r="0.9"/><circle cx="53" cy="39" r="0.9"/></g></svg>
<svg class="abs" style="left:440px;top:15px" width="21" height="20" viewBox="0 0 21 20"><path d="M1 1H13M1 19H13M2.5 4.5H11.5V15.5H2.5Z" fill="none" stroke="#fff" stroke-width="1.5"/><path d="M18 1V6M18 8V12M18 14V19" stroke="#fff" stroke-width="1.5"/></svg>
<div class="abs" style="left:732px;top:0;width:61px;height:50px;background:#3b3b3b"></div>
<svg class="abs" style="left:499px;top:10px" width="31" height="31" viewBox="0 0 31 31" font-family="Liberation Sans"><circle cx="15" cy="15" r="15" fill="#1c8fe0"/><path d="M4 18Q6 6 17 6Q27 7 28 15Q26 21 19 20Q13 19 15 15Q10 14 9 19Q10 26 18 28Q6 29 4 18Z" fill="#5fd36b"/><path d="M9 19Q10 26 18 28Q28 27 29 18Q27 22 20 22Q13 21 14 15Q10 14 9 19Z" fill="#0d5fb8"/></svg>
<svg class="abs" style="left:561px;top:10px" width="31" height="31" viewBox="0 0 31 31" font-family="Liberation Sans"><path d="M0 8L15 0L30 8V28H0Z" fill="#0f6cbd"/><path d="M0 8H30V28H0Z" fill="#35b8f1"/><path d="M0 8L15 18L30 8" fill="#fff"/><path d="M0 28L15 16L30 28Z" fill="#1a8fdd"/></svg>
<svg class="abs" style="left:624px;top:10px" width="31" height="31" viewBox="0 0 31 31" font-family="Liberation Sans"><path d="M0 2H11L13 4H29V25H0Z" fill="#f0b429"/><path d="M0 7H29V25H0Z" fill="#fcd462"/><path d="M7 14H22V25H19V17H10V25H7Z" fill="#2b86d8"/></svg>
<svg class="abs" style="left:685px;top:10px" width="31" height="31" viewBox="0 0 31 31" font-family="Liberation Sans"><path d="M6 7Q6 1 15 1Q24 1 24 7" fill="none" stroke="#27a0f0" stroke-width="2.2"/><rect x="0" y="6" width="30" height="24" rx="3" fill="#f7f7f7"/><rect x="10" y="13" width="4.5" height="4.5" fill="#f35325"/><rect x="15.5" y="13" width="4.5" height="4.5" fill="#81bc06"/><rect x="10" y="18.5" width="4.5" height="4.5" fill="#05a6f0"/><rect x="15.5" y="18.5" width="4.5" height="4.5" fill="#ffba08"/></svg>
<svg class="abs" style="left:747px;top:10px" width="31" height="31" viewBox="0 0 31 31" font-family="Liberation Sans"><circle cx="15" cy="15" r="15" fill="#db4437"/><path d="M15 15L28 8A15 15 0 0 1 15 30Z" fill="#fbc02d"/><path d="M15 15L15 30A15 15 0 0 1 2 8Z" fill="#0f9d58"/><circle cx="15" cy="15" r="7" fill="#fff"/><circle cx="15" cy="15" r="5.5" fill="#4285f4"/><circle cx="24" cy="24" r="9" fill="#e8501a"/><text x="24" y="28.5" font-size="11" font-weight="700" fill="#fff" text-anchor="middle">R</text></svg>
<svg class="abs" style="left:809px;top:10px" width="31" height="31" viewBox="0 0 31 31" font-family="Liberation Sans"><circle cx="15" cy="15" r="14" fill="#2e9a2e" stroke="#2e9a2e" stroke-width="2.5" stroke-dasharray="2 2"/><circle cx="15" cy="15" r="12.5" fill="#3fb63f"/><path d="M7 22Q7 9 23 8Q23 21 9 22Z" fill="#7ad07a"/></svg>
<svg class="abs" style="left:871px;top:10px" width="31" height="31" viewBox="0 0 31 31" font-family="Liberation Sans"><circle cx="15" cy="15" r="15" fill="#ef5b25"/><path d="M8 22L18 12M17 8Q20 6 22 9Q21 12 18 11" fill="none" stroke="#fff" stroke-width="1.8"/></svg>
<svg class="abs" style="left:934px;top:10px" width="31" height="31" viewBox="0 0 31 31" font-family="Liberation Sans"><rect x="0" y="0" width="29" height="29" rx="3" fill="#3e6e93"/><path d="M5 8Q12 6 16 12Q19 18 22 22M20 5L25 10" fill="none" stroke="#d6e6f2" stroke-width="1.4"/></svg>
<svg class="abs" style="left:995px;top:10px" width="31" height="31" viewBox="0 0 31 31" font-family="Liberation Sans"><circle cx="16" cy="15" r="15" fill="#f5f5fa"/><rect x="5" y="8" width="13" height="13" rx="1.5" fill="#5059c9"/><text x="11.5" y="18.5" font-size="10" font-weight="700" fill="#fff" text-anchor="middle">T</text><circle cx="22" cy="9" r="3.5" fill="#7b83eb"/><circle cx="24" cy="23" r="7" fill="#c4314b"/><text x="24" y="27" font-size="10" font-weight="700" fill="#fff" text-anchor="middle">1</text></svg>
<svg class="abs" style="left:1057px;top:10px" width="31" height="31" viewBox="0 0 31 31" font-family="Liberation Sans"><circle cx="15" cy="15" r="14" fill="#2e9a2e" stroke="#2e9a2e" stroke-width="2.5" stroke-dasharray="2 2"/><circle cx="15" cy="15" r="12.5" fill="#3fb63f"/><path d="M7 22Q7 9 23 8Q23 21 9 22Z" fill="#7ad07a"/></svg>
<svg class="abs" style="left:1120px;top:10px" width="31" height="31" viewBox="0 0 31 31" font-family="Liberation Sans"><rect x="9" y="2" width="19" height="25" fill="#fff"/><path d="M12 8H25M12 12H25M12 16H25M12 20H25" stroke="#2b579a" stroke-width="1.6"/><path d="M0 4L17 1V29L0 26Z" fill="#2b579a"/><text x="8" y="19.5" font-size="11" font-weight="700" fill="#fff" text-anchor="middle">W</text></svg>
<svg class="abs" style="left:1181px;top:10px" width="31" height="31" viewBox="0 0 31 31" font-family="Liberation Sans"><rect x="0" y="3" width="28" height="22" fill="#111" stroke="#aaa" stroke-width="1.5"/><path d="M3 7H25" stroke="#777" stroke-width="1.2"/><path d="M5 10L9 12L5 14" stroke="#ddd" fill="none" stroke-width="0.8"/></svg>
<svg class="abs" style="left:1243px;top:10px" width="31" height="31" viewBox="0 0 31 31" font-family="Liberation Sans"><path d="M22 0L30 4V26L22 30L7 16L2 20L0 19V11L2 10L7 14ZM22 8L13 15L22 22Z" fill="#1f9cf0"/><path d="M22 0L30 4V26L22 30Z" fill="#0065a9"/></svg>
<svg class="abs" style="left:1306px;top:10px" width="31" height="31" viewBox="0 0 31 31" font-family="Liberation Sans"><rect x="14" y="4" width="13" height="22" fill="#1e6e42"/><rect x="15.5" y="5" width="10" height="20" fill="#fff"/><path d="M17 7H24V23H17ZM17 10H24M17 13H24M17 16H24M17 19H24" fill="#5a9a74" stroke="#fff" stroke-width="0.8"/><path d="M0 4L17 1V29L0 26Z" fill="#217346"/><text x="8" y="19.5" font-size="11" font-weight="700" fill="#fff" text-anchor="middle">X</text></svg>
<svg class="abs" style="left:1368px;top:10px" width="31" height="31" viewBox="0 0 31 31" font-family="Liberation Sans"><defs><linearGradient id="npg" x1="0" y1="0" x2="0" y2="1"><stop offset="0.35" stop-color="#e8eef0"/><stop offset="0.55" stop-color="#d8f040"/><stop offset="1" stop-color="#20b020"/></linearGradient></defs><path d="M2 2H18L22 5L24 28L2 29Z" fill="url(#npg)" stroke="#bbb" stroke-width="1"/><path d="M4 4H17" stroke="#999" stroke-width="1" stroke-dasharray="1 1"/><ellipse cx="13" cy="17" rx="7" ry="5" fill="#46b832"/><circle cx="17" cy="11" r="2.5" fill="#eee" stroke="#666" stroke-width="0.6"/><path d="M20 22L28 3" stroke="#e8a317" stroke-width="2"/></svg>
<div class="abs" style="left:613px;top:47px;width:51px;height:3px;background:#9bc7f5"></div>
<div class="abs" style="left:732px;top:47px;width:61px;height:3px;background:#9bc7f5"></div>
<div class="abs" style="left:861px;top:47px;width:51px;height:3px;background:#9bc7f5"></div>
<div class="abs" style="left:923px;top:47px;width:51px;height:3px;background:#9bc7f5"></div>
<div class="abs" style="left:985px;top:47px;width:51px;height:3px;background:#9bc7f5"></div>
<div class="abs" style="left:1047px;top:47px;width:51px;height:3px;background:#9bc7f5"></div>
<div class="abs" style="left:1109px;top:47px;width:51px;height:3px;background:#9bc7f5"></div>
<div class="abs" style="left:1171px;top:47px;width:51px;height:3px;background:#9bc7f5"></div>
<div class="abs" style="left:1232px;top:47px;width:52px;height:3px;background:#9bc7f5"></div>
<div class="abs" style="left:1295px;top:47px;width:50px;height:3px;background:#9bc7f5"></div>
<div class="abs" style="left:1357px;top:47px;width:51px;height:3px;background:#9bc7f5"></div>
<div class="abs" style="left:1087.5px;top:47px;width:10px;height:3px;background:#7d9cc0"></div>
<div class="abs" style="left:1211px;top:47px;width:10px;height:3px;background:#7d9cc0"></div>
<div class="abs" style="left:1335px;top:47px;width:10px;height:3px;background:#7d9cc0"></div>
<svg class="abs" style="left:1439px;top:19px" width="17" height="10"><path d="M1 9L8.5 1.5L16 9" fill="none" stroke="#fff" stroke-width="1.4"/></svg>
<svg class="abs" style="left:1480px;top:15px" width="17" height="20" viewBox="0 0 17 20"><rect x="1" y="5" width="10" height="10" rx="2" fill="none" stroke="#fff" stroke-width="1.3"/><path d="M11 8.5L16 6V14L11 11.5" fill="none" stroke="#fff" stroke-width="1.3"/><path d="M3 2Q6 0 9 2M3 18Q6 20 9 18" fill="none" stroke="#fff" stroke-width="1"/></svg>
<svg class="abs" style="left:1517px;top:14px" width="22" height="22" viewBox="0 0 22 22"><path d="M10 1L19 4V11Q19 18 10 21Q1 18 1 11V4Z" fill="#fff"/><path d="M10 1V21M1 10H19" stroke="#1a1a1a" stroke-width="1"/><circle cx="16" cy="16" r="5.5" fill="#e81123"/><path d="M13.8 13.8L18.2 18.2M18.2 13.8L13.8 18.2" stroke="#fff" stroke-width="1.3"/></svg>
<svg class="abs" style="left:1556px;top:18px" width="22" height="14" viewBox="0 0 22 14"><rect x="6" y="2" width="14" height="10" fill="#fff" stroke="#fff" stroke-width="1"/><path d="M6 7H1M2 4V1M4 4V1" stroke="#fff" stroke-width="1.3"/><rect x="20" y="5" width="1.5" height="4" fill="#fff"/></svg>
<svg class="abs" style="left:1599px;top:17px" width="18" height="16" viewBox="0 0 18 16"><path d="M1 9A14 14 0 0 1 17 2M4 12A10 10 0 0 1 15 6M7 14A6 6 0 0 1 13 10" fill="none" stroke="#fff" stroke-width="1.3"/><circle cx="14" cy="14" r="1.5" fill="#fff"/></svg>
<svg class="abs" style="left:1636px;top:16px" width="22" height="18" viewBox="0 0 22 18"><path d="M1 6H5L10 1V17L5 12H1Z" fill="none" stroke="#fff" stroke-width="1.3"/><path d="M13 6Q15 9 13 12M16 3Q20 9 16 15M19 1Q23 9 19 17" fill="none" stroke="#fff" stroke-width="1.2"/></svg>
<div class="t" style="left:1675px;top:17px;font-size:14.5px;line-height:17px;color:#fff;letter-spacing:-0.4px">ENG</div>
<div class="t" style="left:1741px;top:5px;font-size:14.5px;line-height:17px;color:#fff;letter-spacing:-0.5px">16:44</div>
<div class="t" style="left:1720px;top:28px;font-size:14.7px;line-height:17px;color:#fff;letter-spacing:-0.1px">30-04-2024</div>
<svg class="abs" style="left:1818px;top:15px" width="22" height="21" viewBox="0 0 22 21"><path d="M1 1H21V16H12L10 20L8 16H1Z" fill="none" stroke="#fff" stroke-width="1.3" stroke-linejoin="round"/></svg>
<svg class="abs" style="left:1866px;top:12px" width="26" height="26" viewBox="0 0 26 26"><path d="M7 2H15L11 20H3Q0 20 1 17Z" fill="#2b7fe0"/><path d="M11 6H22Q25 6 24 9L20 24H10Z" fill="#c054e8"/><path d="M8 8H17L14 18H5Z" fill="#3cc7b8"/><rect x="8" y="17" width="18" height="9" rx="2" fill="#f8c517"/><text x="17" y="24.5" font-size="7" font-weight="700" fill="#222" text-anchor="middle">PRE</text></svg>
<div class="abs" style="left:1914px;top:0;width:1px;height:50px;background:#555"></div>
</div><!--/taskbar-->
</body></html>
